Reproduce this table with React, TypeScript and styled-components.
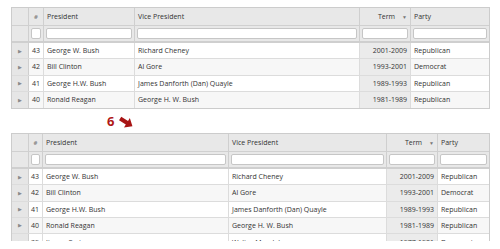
import React from "react";
import styled, { createGlobalStyle } from "styled-components";

type President = {
  num: number;
  name: string;
  vice: string;
  term: string;
  party: string;
};

const presidents: President[] = [
  { num: 43, name: "George W. Bush", vice: "Richard Cheney", term: "2001-2009", party: "Republican" },
  { num: 42, name: "Bill Clinton", vice: "Al Gore", term: "1993-2001", party: "Democrat" },
  { num: 41, name: "George H.W. Bush", vice: "James Danforth (Dan) Quayle", term: "1989-1993", party: "Republican" },
  { num: 40, name: "Ronald Reagan", vice: "George H. W. Bush", term: "1981-1989", party: "Republican" },
  { num: 39, name: "Jimmy Carter", vice: "Walter Mondale", term: "1977-1981", party: "Democrat" },
];

const GlobalStyle = createGlobalStyle`
  html, body {
    margin: 0;
    padding: 0;
    background: #ffffff;
  }
  body {
    font-family: "Open Sans", "Liberation Sans", sans-serif;
    color: #333333;
  }
`;

const Page = styled.div`
  width: 500px;
  height: 249px;
  overflow: hidden;
  padding: 7px 0 0 11px;
  box-sizing: border-box;
`;

const GridFrame = styled.div<{ $height?: number }>`
  width: 479px;
  border: 1px solid #cccccc;
  border-bottom: ${(p) => (p.$height ? "none" : "1px solid #cccccc")};
  box-sizing: border-box;
  overflow: hidden;
  height: ${(p) => (p.$height ? `${p.$height}px` : "auto")};
`;

const Row = styled.div<{ $cols: string; $alt?: boolean }>`
  display: grid;
  grid-template-columns: ${(p) => p.$cols};
  background: ${(p) => (p.$alt ? "#f7f7f7" : "#ffffff")};
`;

const HeaderRow = styled(Row)`
  height: 18px;
  background: #e8e8e8;
  border-bottom: 1px solid #d0d0d0;
  box-sizing: border-box;
`;

const FilterRow = styled(Row)`
  height: 17px;
  background: #e8e8e8;
  border-bottom: 2px solid #cfcfcf;
  box-sizing: border-box;
`;

const HeadCell = styled.div<{ $align?: "left" | "center" | "right" }>`
  display: flex;
  align-items: center;
  justify-content: ${(p) =>
    p.$align === "center" ? "center" : p.$align === "right" ? "flex-end" : "flex-start"};
  padding: 0 3px;
  font-size: 7px;
  color: #333333;
  border-right: 1px solid #cfcfcf;
  white-space: nowrap;
  overflow: hidden;
  &:last-child {
    border-right: none;
  }
`;

const HashMark = styled.span`
  color: #888888;
  font-weight: 700;
  font-size: 6px;
`;

const SortArrow = styled.span`
  margin-left: 7px;
  font-size: 5px;
  color: #777777;
`;

const FilterCell = styled.div`
  display: flex;
  align-items: center;
  padding: 0 2px;
  border-right: 1px solid #cfcfcf;
  &:last-child {
    border-right: none;
  }
`;

const FilterInput = styled.div`
  flex: 1;
  height: 11px;
  background: #ffffff;
  border: 1px solid #c6c6c6;
  border-radius: 2px;
  box-sizing: border-box;
`;

const DataRow = styled(Row)`
  height: 16.25px;
  border-bottom: 1px solid #dcdcdc;
  box-sizing: border-box;
  &:last-child {
    border-bottom: none;
  }
`;

const Cell = styled.div<{ $align?: "left" | "right"; $shade?: boolean }>`
  display: flex;
  align-items: center;
  justify-content: ${(p) => (p.$align === "right" ? "flex-end" : "flex-start")};
  padding: 0 3px;
  font-size: 7px;
  color: #333333;
  white-space: nowrap;
  overflow: hidden;
  background: ${(p) => (p.$shade ? "#ebebeb" : "transparent")};
  border-right: 1px solid #dcdcdc;
  &:last-child {
    border-right: none;
  }
`;

const ExpanderCell = styled.div`
  display: flex;
  align-items: center;
  justify-content: center;
  background: #e6e6e6;
  border-right: 1px solid #cfcfcf;
  color: #8a8a8a;
  font-size: 5px;
`;

const BlankHead = styled.div`
  border-right: 1px solid #cfcfcf;
`;

const Callout = styled.div`
  display: flex;
  align-items: center;
  gap: 4px;
  height: 24px;
  padding-left: 96px;
`;

const CalloutNumber = styled.span`
  font-family: "Open Sans", "Liberation Sans", sans-serif;
  font-size: 13px;
  font-weight: 700;
  color: #b01818;
  line-height: 1;
`;

const Arrow = () => (
  <svg width="17" height="13" viewBox="0 0 17 13" style={{ marginTop: 3 }}>
    <g transform="rotate(32 8.5 6.5)">
      <path d="M1 4.4 L9 4.4 L9 1 L15.5 6.5 L9 12 L9 8.6 L1 8.6 Z" fill="#a81414" />
    </g>
  </svg>
);

type GridProps = { cols: string; rows: President[]; height?: number };

const PresidentGrid = ({ cols, rows, height }: GridProps) => (
  <GridFrame $height={height}>
    <HeaderRow $cols={cols}>
      <BlankHead />
      <HeadCell $align="center">
        <HashMark>#</HashMark>
      </HeadCell>
      <HeadCell>President</HeadCell>
      <HeadCell>Vice President</HeadCell>
      <HeadCell $align="right">
        Term
        <SortArrow>▼</SortArrow>
      </HeadCell>
      <HeadCell>Party</HeadCell>
    </HeaderRow>
    <FilterRow $cols={cols}>
      <BlankHead />
      {[0, 1, 2, 3, 4].map((i) => (
        <FilterCell key={i}>
          <FilterInput />
        </FilterCell>
      ))}
    </FilterRow>
    {rows.map((p, i) => (
      <DataRow key={p.num} $cols={cols} $alt={i % 2 === 1}>
        <ExpanderCell>▶</ExpanderCell>
        <Cell $align="right">{p.num}</Cell>
        <Cell>{p.name}</Cell>
        <Cell>{p.vice}</Cell>
        <Cell $align="right" $shade>
          {p.term}
        </Cell>
        <Cell>{p.party}</Cell>
      </DataRow>
    ))}
  </GridFrame>
);

export default function App() {
  return (
    <Page>
      <GlobalStyle />
      <PresidentGrid cols="17px 15px 91px 225px 51px 1fr" rows={presidents.slice(0, 4)} />
      <Callout>
        <CalloutNumber>6</CalloutNumber>
        <Arrow />
      </Callout>
      <PresidentGrid cols="17px 14px 186px 158px 51px 1fr" rows={presidents} height={108} />
    </Page>
  );
}
